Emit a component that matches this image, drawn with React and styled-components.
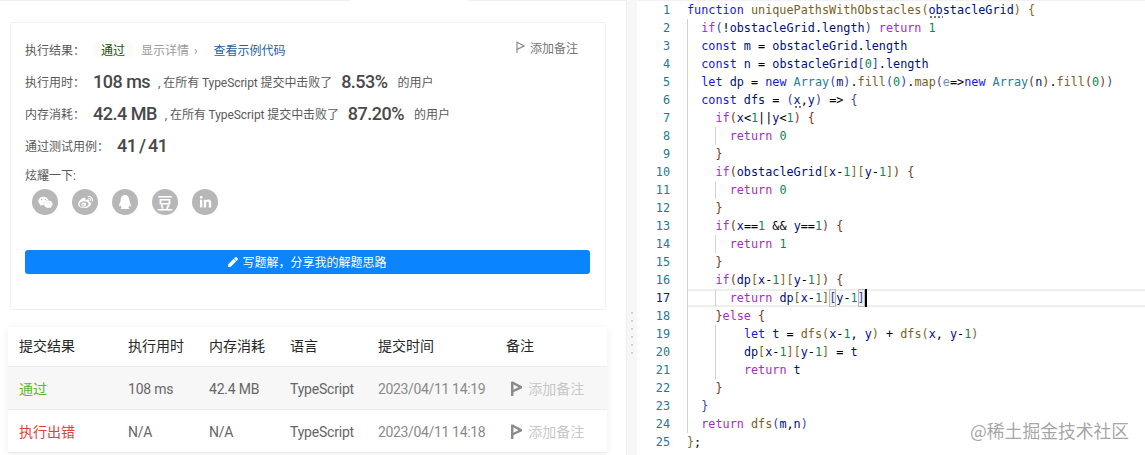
import React from 'react';
import styled, { createGlobalStyle } from 'styled-components';
import { FaWeixin, FaWeibo, FaQq, FaLinkedinIn, FaPen } from 'react-icons/fa';

const CH = 7.11;

const GlobalStyle = createGlobalStyle`
  html, body {
    margin: 0;
    padding: 0;
    height: 455px;
    overflow: hidden;
    background: #fff;
    font-family: Roboto, "Noto Sans CJK SC", sans-serif;
  }
`;

const Page = styled.div`
  position: relative;
  display: flex;
  width: 1145px;
  height: 455px;
  overflow: hidden;
`;

const LeftPane = styled.div`
  width: 626px;
  flex: none;
`;

const TabEdge = styled.div`
  display: flex;
  height: 1px;
`;

const TabEdgePart = styled.span`
  width: ${props => props.$width}px;
  background: ${props => (props.$open ? '#fff' : '#efefef')};
`;

const Card = styled.section`
  box-sizing: border-box;
  width: 596px;
  height: 288px;
  margin: 21px 0 17px 10px;
  padding: 10px 15px 0 14px;
  border: 1px solid #f0f0f0;
  border-radius: 3px;
`;

const Row = styled.div`
  display: flex;
  align-items: center;
  height: 32px;
  font-size: 12px;
  color: #595959;
`;

const Label = styled.span`
  width: ${props => props.$width}px;
  flex: none;
`;

const PassBadge = styled.span`
  margin: 0 8px 0 0;
  padding: 0 8px;
  background: #f9fdf6;
  border-radius: 8px;
  color: #2c4a22;
  box-shadow: 0 0 4px #f9fdf6;
`;

const Details = styled.span`
  margin-right: 16px;
  word-spacing: 2px;
  color: #9a9a9a;
`;

const SampleLink = styled.span`
  color: #1f5f99;
`;

const NoteAction = styled.span`
  display: flex;
  align-items: center;
  gap: 5px;
  margin-left: auto;
  margin-right: 12px;
  margin-top: -4px;
  color: #757575;
`;

const Big = styled.span`
  font-size: 18px;
  font-weight: 500;
  letter-spacing: -0.5px;
  color: #484848;
  white-space: pre;
`;

const Fraction = styled(Big)`
  word-spacing: -1.5px;
`;

const Percent = styled(Big)`
  margin: 0 10px 0 9px;
`;

const Sub = styled.span`
  margin-left: 8px;
  letter-spacing: -0.08px;
  white-space: pre;
`;

const ShareLabel = styled.div`
  margin-top: 6px;
  font-size: 12px;
  line-height: 18px;
  color: #595959;
`;

const ShareRow = styled.div`
  display: flex;
  gap: 14px;
  margin: 4px 0 0 7px;
`;

const ShareIcon = styled.span`
  display: flex;
  align-items: center;
  justify-content: center;
  width: 26px;
  height: 26px;
  border-radius: 50%;
  background: #b7b7b7;
  color: #fff;
  font-size: ${props => props.$size || 14}px;
  font-weight: 500;
`;

const SolutionButton = styled.button`
  display: flex;
  align-items: center;
  justify-content: center;
  gap: 4px;
  width: 565px;
  height: 24px;
  margin-top: 35px;
  padding: 0 0 1px;
  border: none;
  border-radius: 3px;
  background: #0a84ff;
  color: #fff;
  font-family: inherit;
  font-size: 12px;
`;

const Table = styled.div`
  width: 599px;
  margin-left: 8px;
  box-shadow: 0 1px 8px rgba(0, 0, 0, 0.07);
`;

const TableRow = styled.div`
  display: grid;
  grid-template-columns: 109px 81px 81px 88px 128px 1fr;
  align-items: center;
  box-sizing: border-box;
  height: ${props => props.$height}px;
  padding: 0 0 ${props => props.$lift || 0}px 11px;
  border-bottom: 1px solid #ececec;
  background: ${props => (props.$shaded ? '#f7f7f7' : '#fff')};
  font-size: 14px;
  color: #666;
`;

const HeaderCell = styled.span`
  color: #262626;
`;

const Result = styled.span`
  color: ${props => (props.$ok ? '#5cb531' : '#e0403c')};
`;

const LatinCell = styled.span`
  padding-top: 1px;
  letter-spacing: -0.2px;
`;

const TimeCell = styled(LatinCell)`
  color: #8a8a8a;
  letter-spacing: -0.35px;
`;

const RowNote = styled.span`
  display: flex;
  align-items: center;
  gap: 6px;
  padding-left: 5px;
  color: #c8c8c8;
`;

const Gutter = styled.div`
  display: flex;
  flex-direction: column;
  align-items: center;
  gap: 6px;
  box-sizing: border-box;
  width: 11px;
  flex: none;
  padding-top: 312px;
  background: #f7f7f7;
  border-left: 1px solid #f0f0f0;
`;

const GripDot = styled.span`
  width: 2px;
  height: 2px;
  background: #cfcfcf;
`;

const Editor = styled.div`
  flex: 1;
  border-top: 1px solid #f2f2f2;
  font-family: "DejaVu Sans Mono", monospace;
  font-size: 11.8px;
`;

const CodeLine = styled.div`
  display: flex;
  height: 18px;
  line-height: 19px;
`;

const LineNo = styled.span`
  width: 33px;
  flex: none;
  text-align: right;
  color: ${props => (props.$active ? '#0b216f' : '#237893')};
`;

const LineBody = styled.div`
  display: flex;
  flex: 1;
  margin-left: 17px;
  white-space: pre;
  ${props => props.$active && `
    box-shadow: inset 0 2px 0 #eeeeee, inset 0 -2px 0 #eeeeee;
  `}
`;

const Indent = styled.span`
  box-sizing: border-box;
  width: ${2 * CH}px;
  flex: none;
  border-left: 1px solid ${props => (props.$guide ? '#d3d3d3' : 'transparent')};
`;

const Token = styled.span`
  color: ${props => props.$color};
`;

const Hint = styled(Token)`
  background-image: radial-gradient(circle, #777 0.9px, transparent 1.1px);
  background-size: 4px 4px;
  background-repeat: repeat-x;
  background-position: 0 14px;
`;

const Matched = styled(Token)`
  box-shadow: inset 0 0 0 1px #bdbdbd;
  background: #eef0ee;
`;

const Cursor = styled.span`
  width: 2px;
  height: 18px;
  flex: none;
  background: #000;
`;

const Watermark = styled.div`
  position: absolute;
  left: 970px;
  top: 418px;
  font-family: "Noto Sans CJK SC", sans-serif;
  font-size: 17.8px;
  line-height: 24px;
  color: rgba(120, 120, 120, 0.68);
  text-shadow: 0 0 2px #fff;
`;

const Flag = ({ size = 12, width = 1.2 }) => (
  <svg width={size * 0.75} height={size} viewBox="0 0 9 12" fill="none" stroke="#8c8c8c" strokeWidth={width}>
    <path d="M1 0.5V12" />
    <path d="M1 1.2L8 5L1 8.4" strokeLinejoin="miter" />
  </svg>
);

const CODE = [
  'function uniquePathsWithObstacles(~ob~stacleGrid) {',
  '  if(!obstacleGrid.length) return 1',
  '  const m = obstacleGrid.length',
  '  const n = obstacleGrid[0].length',
  '  let dp = new Array(m).fill(0).map(e=>new Array(n).fill(0))',
  '  const dfs = (~x~,y) => {',
  '    if(x<1||y<1) {',
  '      return 0',
  '    }',
  '    if(obstacleGrid[x-1][y-1]) {',
  '      return 0',
  '    }',
  '    if(x==1 && y==1) {',
  '      return 1',
  '    }',
  '    if(dp[x-1][y-1]) {',
  '      return dp[x-1]‹[›y-1‹]›¦',
  '    }else {',
  '        let t = dfs(x-1, y) + dfs(x, y-1)',
  '        dp[x-1][y-1] = t',
  '        return t',
  '    }',
  '  }',
  '  return dfs(m,n)',
  '};',
];

const BLUE = new Set(['function', 'const', 'let', 'new']);
const PURPLE = new Set(['if', 'else', 'return']);
const BRACKETS = ['#7a6a1a', '#3b3fb0', '#7b3814'];

// turns one source line into coloured tokens, tracking bracket depth across lines
function tokenize(text, state) {
  const out = [];
  const re = /~\w+~|‹.›|¦|[A-Za-z_]\w*|\d+|[()[\]{}]|=>|\s+|./g;
  let m;
  while ((m = re.exec(text))) {
    const t = m[0];
    if (t[0] === '~') {
      out.push({ kind: 'hint', text: t.slice(1, -1), color: '#001080' });
    } else if (t[0] === '‹') {
      const inner = t[1];
      if (inner === ']') state.depth -= 1;
      out.push({ kind: 'match', text: inner, color: BRACKETS[1] });
      if (inner === '[') state.depth += 1;
    } else if (t === '¦') {
      out.push({ kind: 'cursor' });
    } else if (BLUE.has(t)) {
      out.push({ text: t, color: '#1414ee' });
    } else if (PURPLE.has(t)) {
      out.push({ text: t, color: '#a62cc7' });
    } else if (t === 'Array') {
      out.push({ text: t, color: '#267f99' });
    } else if (t === 'e') {
      out.push({ text: t, color: '#7b8bab' });
    } else if (/^[A-Za-z_]/.test(t)) {
      const isCall = text[m.index + t.length] === '(';
      out.push({ text: t, color: isCall ? '#795e26' : '#001080' });
    } else if (/^\d/.test(t)) {
      out.push({ text: t, color: '#098658' });
    } else if ('([{'.includes(t)) {
      out.push({ text: t, color: BRACKETS[state.depth % 3] });
      state.depth += 1;
    } else if (')]}'.includes(t)) {
      state.depth -= 1;
      out.push({ text: t, color: BRACKETS[state.depth % 3] });
    } else {
      out.push({ text: t, color: '#000' });
    }
  }
  return out;
}

function renderLines() {
  const state = { depth: 0 };
  return CODE.map((raw, i) => {
    const indent = raw.match(/^ */)[0].length;
    const tokens = tokenize(raw.slice(indent), state);
    const active = i === 16;
    const units = Array.from({ length: indent / 2 }, (_, u) => u);
    return (
      <CodeLine key={i}>
        <LineNo $active={active}>{i + 1}</LineNo>
        <LineBody $active={active}>
          {units.map(u => (
            <Indent key={u} $guide={u === 0 || (u === 2 && indent > 4)} />
          ))}
          {tokens.map((tok, k) => {
            if (tok.kind === 'cursor') return <Cursor key={k} />;
            if (tok.kind === 'hint') return <Hint key={k} $color={tok.color}>{tok.text}</Hint>;
            if (tok.kind === 'match') return <Matched key={k} $color={tok.color}>{tok.text}</Matched>;
            return <Token key={k} $color={tok.color}>{tok.text}</Token>;
          })}
        </LineBody>
      </CodeLine>
    );
  });
}

const SUBMISSIONS = [
  { ok: true, result: '通过', time: '108 ms', memory: '42.4 MB', at: '2023/04/11 14:19', height: 43, shaded: true },
  { ok: false, result: '执行出错', time: 'N/A', memory: 'N/A', at: '2023/04/11 14:18', height: 43 },
];

function App() {
  return (
    <Page>
      <GlobalStyle />
      <LeftPane>
        <TabEdge>
          <TabEdgePart $width={350} />
          <TabEdgePart $width={118} $open />
          <TabEdgePart $width={158} />
        </TabEdge>
        <Card>
          <Row>
            <Label $width={68}>执行结果：</Label>
            <PassBadge>通过</PassBadge>
            <Details>显示详情 ›</Details>
            <SampleLink>查看示例代码</SampleLink>
            <NoteAction>
              <Flag />
              添加备注
            </NoteAction>
          </Row>
          <Row>
            <Label $width={68}>执行用时：</Label>
            <Big>108 ms</Big>
            <Sub>, 在所有 TypeScript 提交中击败了</Sub>
            <Percent>8.53%</Percent>
            <span>的用户</span>
          </Row>
          <Row>
            <Label $width={68}>内存消耗：</Label>
            <Big>42.4 MB</Big>
            <Sub>, 在所有 TypeScript 提交中击败了</Sub>
            <Percent>87.20%</Percent>
            <span>的用户</span>
          </Row>
          <Row>
            <Label $width={92}>通过测试用例：</Label>
            <Fraction>41 / 41</Fraction>
          </Row>
          <ShareLabel>炫耀一下:</ShareLabel>
          <ShareRow>
            <ShareIcon $size={15}><FaWeixin /></ShareIcon>
            <ShareIcon $size={15}><FaWeibo /></ShareIcon>
            <ShareIcon $size={14}><FaQq /></ShareIcon>
            <ShareIcon $size={16}>豆</ShareIcon>
            <ShareIcon $size={13}><FaLinkedinIn /></ShareIcon>
          </ShareRow>
          <SolutionButton>
            <FaPen size={10} />
            写题解，分享我的解题思路
          </SolutionButton>
        </Card>
        <Table>
          <TableRow $height={40} $lift={3}>
            <HeaderCell>提交结果</HeaderCell>
            <HeaderCell>执行用时</HeaderCell>
            <HeaderCell>内存消耗</HeaderCell>
            <HeaderCell>语言</HeaderCell>
            <HeaderCell>提交时间</HeaderCell>
            <HeaderCell>备注</HeaderCell>
          </TableRow>
          {SUBMISSIONS.map(item => (
            <TableRow key={item.at} $height={item.height} $shaded={item.shaded}>
              <Result $ok={item.ok}>{item.result}</Result>
              <LatinCell>{item.time}</LatinCell>
              <LatinCell>{item.memory}</LatinCell>
              <LatinCell>TypeScript</LatinCell>
              <TimeCell>{item.at}</TimeCell>
              <RowNote>
                <Flag size={15} width={2} />
                添加备注
              </RowNote>
            </TableRow>
          ))}
        </Table>
      </LeftPane>
      <Gutter>
        {[0, 1, 2, 3, 4, 5].map(i => <GripDot key={i} />)}
      </Gutter>
      <Editor>{renderLines()}</Editor>
      <Watermark>@稀土掘金技术社区</Watermark>
    </Page>
  );
}

export default App;
